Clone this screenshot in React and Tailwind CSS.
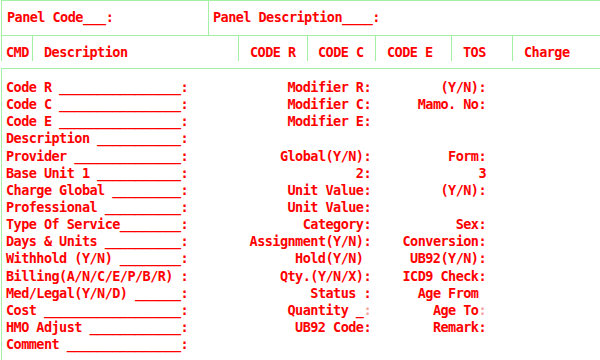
import React from 'react';

const rows = [
  ['Code R ________________:', 'Modifier R:', '(Y/N):'],
  ['Code C ________________:', 'Modifier C:', 'Mamo. No:'],
  ['Code E ________________:', 'Modifier E:', ''],
  ['Description ___________:', '', ''],
  ['Provider ______________:', 'Global(Y/N):', 'Form:'],
  ['Base Unit 1 ___________:', '2:', '3'],
  ['Charge Global _________:', 'Unit Value:', '(Y/N):'],
  ['Professional __________:', 'Unit Value:', ''],
  ['Type Of Service________:', 'Category:', 'Sex:'],
  ['Days & Units __________:', 'Assignment(Y/N):', 'Conversion:'],
  ['Withhold (Y/N) ________:', 'Hold(Y/N) ', 'UB92(Y/N):'],
  ['Billing(A/N/C/E/P/B/R) :', 'Qty.(Y/N/X):', 'ICD9 Check:'],
  ['Med/Legal(Y/N/D) ______:', 'Status :', 'Age From '],
  ['Cost __________________:', 'Quantity _', 'Age To'],
  ['HMO Adjust ____________:', 'UB92 Code:', 'Remark:'],
  ['Comment _______________:', '', ''],
];

const columns = [
  { label: 'CMD', w: 'w-[32px]', pl: 'pl-[4px]', border: 'border-l' },
  { label: 'Description', w: 'w-[206px]', pl: 'pl-[11px]' },
  { label: 'CODE R', w: 'w-[69px]', pl: 'pl-[11px]' },
  { label: 'CODE C', w: 'w-[68px]', pl: 'pl-[10px]' },
  { label: 'CODE E', w: 'w-[76px]', pl: 'pl-[11px]' },
  { label: 'TOS', w: 'w-[61px]', pl: 'pl-[11px]' },
];

export default function App() {
  return (
    <div
      className="w-[600px] h-[360px] overflow-hidden bg-white text-[#ff0000] font-bold text-[13.5px] tracking-[-0.54px] leading-[17.1px]"
      style={{ fontFamily: '"DejaVu Sans Mono", "Liberation Mono", monospace' }}
    >
      {/* Panel header */}
      <div className="ml-px flex h-[36px] border-t border-b border-l border-[#a4f0a4]">
        <div className="w-[207px] border-r border-[#a4f0a4] pl-[5px] pt-[8px] whitespace-pre">
          Panel Code___:
        </div>
        <div className="flex-1 pl-[4px] pt-[8px] whitespace-pre">
          Panel Description____:
        </div>
      </div>

      {/* Column header */}
      <div className="ml-px flex h-[25px]">
        {columns.map(c => (
          <div
            key={c.label}
            className={`${c.w} ${c.pl} ${c.border || ''} border-r border-[#a4f0a4] pt-[8px] whitespace-pre`}
          >
            {c.label}
          </div>
        ))}
        <div className="flex-1 pl-[11px] pt-[8px]">Charge</div>
      </div>

      {/* Detail form */}
      <div className="mt-[7px] ml-px h-[300px] border-t border-l border-[#a4f0a4] pt-[10px] pl-[4px]">
        {rows.map((r, i) => (
          <div key={i} className="flex whitespace-pre h-[17.15px]">
            <div className="w-[184px]">{r[0]}</div>
            <div className="w-[181px] text-right">
              {r[1]}
              {r[1] === 'Quantity _' && <span className="text-[#f7a0a0]">:</span>}
            </div>
            <div className="w-[115px] text-right">
              {r[2]}
              {r[2] === 'Age To' && <span className="text-[#f7a0a0]">:</span>}
            </div>
          </div>
        ))}
      </div>
    </div>
  );
}
